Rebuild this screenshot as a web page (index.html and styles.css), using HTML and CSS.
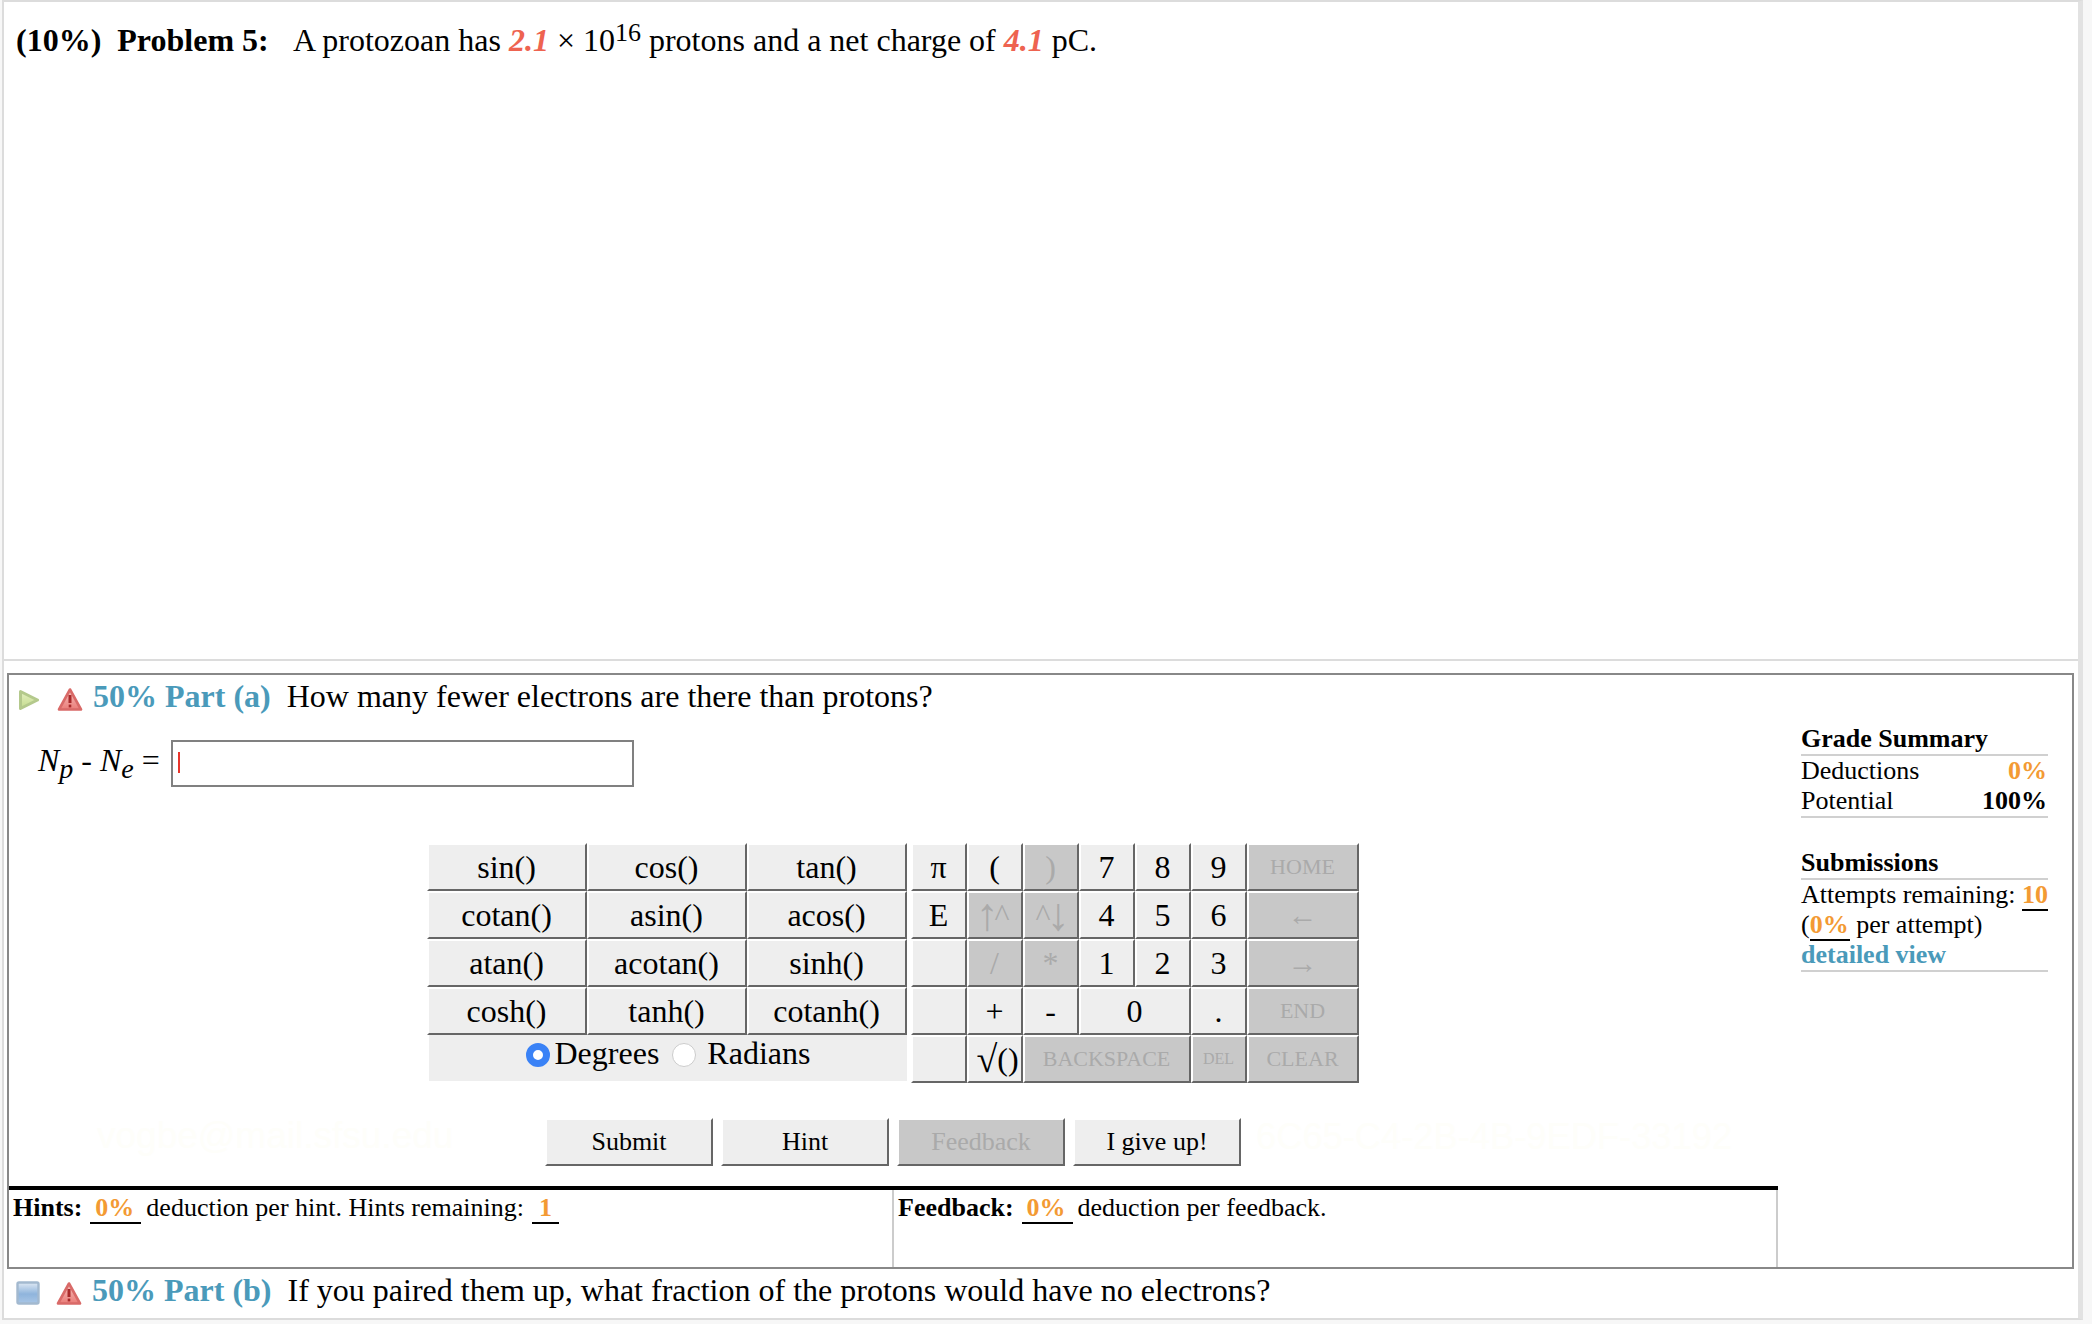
FILE: index.html
```html
<!DOCTYPE html>
<html lang="en">
<head>
<meta charset="utf-8">
<title>Problem 5</title>
<link rel="stylesheet" href="styles.css">
</head>
<body>
<div class="frame">
  <section class="problem">
    <p class="statement"><b class="weight">(10%)</b> <b class="pnum">Problem 5:</b> A protozoan has <i class="var">2.1</i> × 10<sup class="exp">16</sup> protons and a net charge of <i class="var">4.1</i> pC.</p>
  </section>
  <section class="parts">
    <div class="part">
      <span class="mark mark-mail">vogbe@mail.sfsu.edu</span>
      <span class="mark mark-code">6C65-C4-2B-4B-9EDF-33192</span>
      <div class="part-main">
        <div class="part-head">
          <svg class="ico-play" viewBox="0 0 22 22" aria-hidden="true"><defs><linearGradient id="gp" x1="0" y1="0" x2="0" y2="1"><stop offset="0" stop-color="#e4efc0"/><stop offset="1" stop-color="#c4dc8e"/></linearGradient></defs><path d="M2.5 2.5 L19.5 11 L2.5 19.5 Z" fill="url(#gp)" stroke="#b4c98c" stroke-width="3" stroke-linejoin="round"/></svg>
          <svg class="ico-warn" viewBox="0 0 26 25" aria-hidden="true"><defs><linearGradient id="gw" x1="0" y1="0" x2="0" y2="1"><stop offset="0" stop-color="#f6c4c0"/><stop offset="1" stop-color="#ea7c78"/></linearGradient></defs><path d="M13 2.5 L24 22.5 H2 Z" fill="url(#gw)" stroke="#d96a68" stroke-width="2.6" stroke-linejoin="round"/><path d="M13 8 V16" stroke="#a82a2a" stroke-width="3"/><path d="M13 17.6 V20.4" stroke="#a82a2a" stroke-width="2.6"/></svg>
          <span class="part-label">50% Part (a)</span>
          <span class="part-q">How many fewer electrons are there than protons?</span>
        </div>
        <div class="answer">
          <div class="answer-label"><i>N<sub class="idx">p</sub></i> - <i>N<sub class="idx">e</sub></i> =</div>
          <div class="answer-box"><span class="caret"></span></div>
        </div>
        <div class="keypad">
          <div class="key">sin()</div><div class="key">cos()</div><div class="key">tan()</div>
          <div class="gap"></div>
          <div class="key">π</div><div class="key">(</div><div class="key off">)</div><div class="key">7</div><div class="key">8</div><div class="key">9</div><div class="key off small">HOME</div>
          <div class="key">cotan()</div><div class="key">asin()</div><div class="key">acos()</div>
          <div class="gap"></div>
          <div class="key">E</div><div class="key off"><span class="tall">↑</span>^</div><div class="key off">^<span class="tall">↓</span></div><div class="key">4</div><div class="key">5</div><div class="key">6</div><div class="key off small"><span class="wide">←</span></div>
          <div class="key">atan()</div><div class="key">acotan()</div><div class="key">sinh()</div>
          <div class="gap"></div>
          <div class="key"></div><div class="key off">/</div><div class="key off">*</div><div class="key">1</div><div class="key">2</div><div class="key">3</div><div class="key off small"><span class="wide">→</span></div>
          <div class="key">cosh()</div><div class="key">tanh()</div><div class="key">cotanh()</div>
          <div class="gap"></div>
          <div class="key"></div><div class="key">+</div><div class="key">-</div><div class="key span2">0</div><div class="key">.</div><div class="key off small">END</div>
          <div class="mode"><input class="radio" type="radio" name="unit" checked><span class="mode-deg">Degrees</span><input class="radio" type="radio" name="unit"><span class="mode-rad">Radians</span></div>
          <div class="gap"></div>
          <div class="key"></div><div class="key root-key"><span class="root">√</span>()</div><div class="key off small span3">BACKSPACE</div><div class="key off tiny">DEL</div><div class="key off small">CLEAR</div>
        </div>
        <div class="actions">
          <div class="key btn">Submit</div>
          <div class="key btn">Hint</div>
          <div class="key btn off">Feedback</div>
          <div class="key btn">I give up!</div>
        </div>
        <div class="notes">
          <div class="note"><b>Hints:</b><span class="tally pct">0%</span>deduction per hint. Hints remaining:<span class="tally one">1</span></div>
          <div class="note"><b>Feedback:</b><span class="tally pct">0%</span>deduction per feedback.</div>
        </div>
      </div>
      <aside class="summary">
        <h3 class="sum-title">Grade Summary</h3>
        <div class="sum-block">
          <div class="sum-row"><span>Deductions</span><b class="orange">0%</b></div>
          <div class="sum-row"><span>Potential</span><b>100%</b></div>
        </div>
        <h3 class="sum-title sub">Submissions</h3>
        <div class="sum-block">
          <div class="sum-line">Attempts remaining: <b class="orange ul">10</b></div>
          <div class="sum-line">(<b class="orange ul pad">0%</b> per attempt)</div>
          <div class="sum-line"><b class="teal">detailed view</b></div>
        </div>
      </aside>
    </div>
    <div class="part-closed">
      <svg class="ico-box" viewBox="0 0 24 24" aria-hidden="true"><defs><linearGradient id="gb" x1="0" y1="0" x2="0" y2="1"><stop offset="0" stop-color="#dfe9f4"/><stop offset="0.55" stop-color="#8fb4dc"/><stop offset="1" stop-color="#a9c6e6"/></linearGradient></defs><rect x="1.5" y="1.5" width="21" height="21" rx="1.5" fill="url(#gb)" stroke="#a3b9cf" stroke-width="2.4"/></svg>
      <svg class="ico-warn alt" viewBox="0 0 26 25" aria-hidden="true"><defs><linearGradient id="gw2" x1="0" y1="0" x2="0" y2="1"><stop offset="0" stop-color="#f6c4c0"/><stop offset="1" stop-color="#ea7c78"/></linearGradient></defs><path d="M13 2.5 L24 22.5 H2 Z" fill="url(#gw2)" stroke="#d96a68" stroke-width="2.6" stroke-linejoin="round"/><path d="M13 8 V16" stroke="#a82a2a" stroke-width="3"/><path d="M13 17.6 V20.4" stroke="#a82a2a" stroke-width="2.6"/></svg>
      <span class="part-label">50% Part (b)</span>
      <span class="part-q">If you paired them up, what fraction of the protons would have no electrons?</span>
    </div>
  </section>
</div>
</body>
</html>
```
FILE: styles.css
```css
* { box-sizing: border-box; }
html, body { margin: 0; padding: 0; }
body {
  width: 2092px;
  height: 1324px;
  background: #f7f7f7;
  font-family: "Liberation Serif", "Times New Roman", serif;
  color: #000;
  overflow: hidden;
}
.frame {
  width: 2081px;
  height: 1320px;
  margin-left: 2px;
  background: #fff;
  border-top: 2px solid #dcdcdc;
  border-left: 2px solid #dcdcdc;
  border-right: 5px solid #e2e2e2;
  border-bottom: 2px solid #dcdcdc;
}
.problem {
  height: 659px;
  border-bottom: 2px solid #dcdcdc;
  padding: 20px 0 0 12px;
}
.statement {
  margin: 0;
  font-size: 32px;
  line-height: 36px;
  white-space: nowrap;
}
.weight { margin-right: 8px; }
.pnum { margin-right: 18px; }
.var { font-weight: bold; color: #ee6350; }
.exp { font-size: 26px; line-height: 0; vertical-align: 10px; }
.parts { padding: 12px 4px 0 3px; }
.part {
  position: relative;
  display: flex;
  height: 596px;
  border: 2px solid #888;
}
.mark {
  position: absolute;
  font-family: "Liberation Sans", Arial, sans-serif;
  line-height: 40px;
  color: #fefefa;
  white-space: nowrap;
}
.mark-mail { left: 88px; top: 441px; font-size: 37px; }
.mark-code { left: 1247px; top: 442px; font-size: 36.3px; }
.part-main { position: relative; width: 1769px; flex: none; }
.part-head {
  display: flex;
  align-items: center;
  height: 36px;
  margin-top: 3px;
  padding-left: 9px;
  font-size: 32px;
  white-space: nowrap;
}
.ico-play { width: 22px; height: 22px; flex: none; margin: 7px 17px 0 0; filter: blur(0.4px); }
.ico-warn { width: 26px; height: 25px; flex: none; margin: 7px 10px 0 0; filter: blur(0.4px); }
.part-label { font-weight: bold; color: #4a9aba; margin-right: 16px; }
.part-q { color: #000; }
.answer {
  display: flex;
  margin-top: 26px;
  padding-left: 29px;
}
.answer-label {
  width: 133px;
  padding-top: 2px;
  font-size: 32px;
  line-height: 36px;
  white-space: nowrap;
}
.idx { font-size: 28px; line-height: 0; vertical-align: -7px; }
.answer-box {
  width: 463px;
  height: 47px;
  border: 2px solid #808080;
  padding: 10px 0 0 5px;
}
.caret { display: block; width: 2px; height: 21px; background: #e8352b; }
.keypad {
  display: grid;
  grid-template-columns: repeat(3, 160px) 4px repeat(6, 56px) 112px;
  grid-auto-rows: 48px;
  width: 932px;
  margin: 56px 0 0 417.5px;
}
.key {
  display: flex;
  align-items: center;
  justify-content: center;
  background: #eee;
  border-top: 2px solid #fff;
  border-left: 2px solid #fff;
  border-right: 2px solid #666;
  border-bottom: 2px solid #666;
  font-size: 32px;
  white-space: nowrap;
}
.off { background: #c8c8c8; color: #aaa; }
.small { font-size: 22px; }
.tiny { font-size: 16px; }
.span2 { grid-column: span 2; }
.span3 { grid-column: span 3; }
.tall { font-size: 46px; line-height: 40px; margin: 0 -4px; }
.wide { font-size: 30px; }
.root-key { padding-left: 6px; }
.root { font-size: 38px; line-height: 40px; }
.mode {
  grid-column: span 3;
  display: flex;
  align-items: flex-start;
  background: #eee;
  border-left: 2px solid #fff;
  padding: 0 0 0 97px;
  font-size: 32px;
  line-height: 36px;
  margin-bottom: 2px;
}
.radio {
  appearance: none;
  width: 24px;
  height: 24px;
  margin: 8px 0 0 0;
  border-radius: 50%;
  background: #fff;
  border: 1px solid #ccc;
  flex: none;
}
.radio:checked { border: 7px solid #3a82f6; }
.mode-deg { margin: 0 13px 0 5px; }
.mode-rad { margin-left: 11px; }
.actions {
  display: flex;
  gap: 8px;
  margin: 35px 0 0 536px;
}
.btn { width: 168px; height: 48px; font-size: 26px; }
.notes {
  display: grid;
  grid-template-columns: 885px 884px;
  height: 81px;
  margin-top: 20px;
  border-top: 4px solid #000;
}
.note {
  border-right: 2px solid #ccc;
  padding: 3px 0 0 4px;
  font-size: 26px;
  line-height: 30px;
  white-space: nowrap;
}
.tally {
  display: inline;
  color: #f39a33;
  font-weight: bold;
  border-bottom: 2px solid #000;
}
.pct { margin: 0 5px 0 8px; padding: 0 7px 0 5px; }
.one { margin-left: 8px; padding: 0 7px; }
.summary {
  width: 247px;
  margin-left: 23px;
  flex: none;
  padding-top: 49px;
  font-size: 26px;
  line-height: 30px;
}
.sum-title {
  margin: 0;
  font-size: 26px;
  line-height: 30px;
  border-bottom: 2px solid #d0d0d0;
}
.sum-title.sub { margin-top: 30px; }
.sum-block {
  border-bottom: 2px solid #d0d0d0;
  white-space: nowrap;
}
.sum-row { display: flex; justify-content: space-between; padding-right: 1px; }
.orange { color: #f39a33; }
.teal { color: #4a9aba; }
.ul { border-bottom: 2px solid #000; }
.pad { padding-right: 1px; }
.part-closed {
  display: flex;
  align-items: center;
  height: 42px;
  padding: 0 0 0 9px;
  font-size: 32px;
  white-space: nowrap;
}
.ico-box { width: 24px; height: 24px; flex: none; margin: 6px 16px 0 0; filter: blur(0.4px); }
.ico-warn.alt { margin: 6px 10px 0 0; }
```
